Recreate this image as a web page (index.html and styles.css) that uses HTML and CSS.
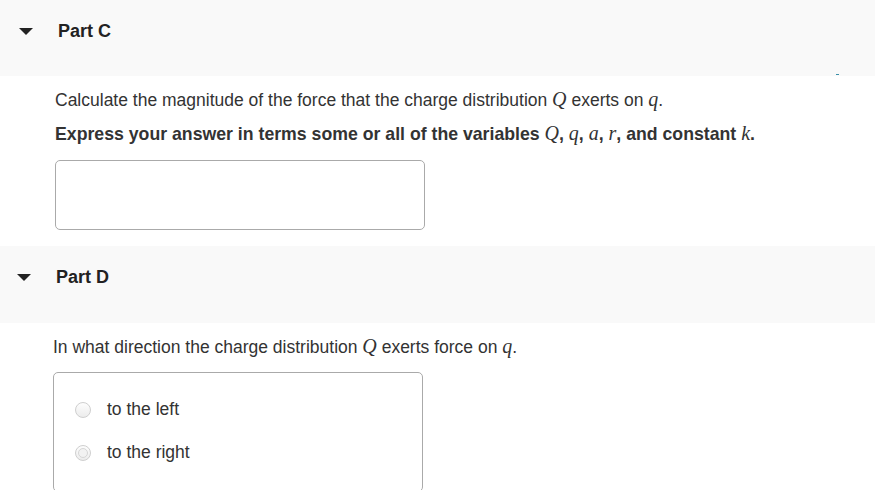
FILE: index.html
```html
<!DOCTYPE html>
<html>
<head>
<meta charset="utf-8">
<link rel="stylesheet" href="styles.css">
</head>
<body>
<section class="part part-c">
  <div class="part-header">
    <span class="caret"></span>
    <h2 class="part-title">Part C</h2>
    <span class="marker"></span>
  </div>
  <div class="part-body">
    <p class="prompt">Calculate the magnitude of the force that the charge distribution <span class="math">Q</span> exerts on <span class="math">q</span>.</p>
    <p class="instruction">Express your answer in terms some or all of the variables <span class="math">Q</span>, <span class="math">q</span>, <span class="math">a</span>, <span class="math">r</span>, and constant <span class="math">k</span>.</p>
    <div class="answer-box"></div>
  </div>
</section>
<section class="part part-d">
  <div class="part-header">
    <span class="caret"></span>
    <h2 class="part-title">Part D</h2>
  </div>
  <div class="part-body">
    <p class="prompt">In what direction the charge distribution <span class="math">Q</span> exerts force on <span class="math">q</span>.</p>
    <div class="choices">
      <label class="choice"><span class="radio"></span><span class="choice-text">to the left</span></label>
      <label class="choice"><span class="radio radio-ring"></span><span class="choice-text">to the right</span></label>
    </div>
  </div>
</section>
</body>
</html>
```
FILE: styles.css
```css
html, body {
  margin: 0;
  padding: 0;
  background: #fff;
  font-family: "Liberation Sans", Arial, sans-serif;
  color: #333;
  overflow: hidden;
}

.part-header {
  position: relative;
  display: flex;
  align-items: flex-start;
  background: #f9f9f9;
  box-sizing: border-box;
}

.part-c .part-header {
  height: 76px;
  padding: 21px 0 0 19px;
}

.part-d .part-header {
  height: 77px;
  padding: 21px 0 0 17px;
}

.caret {
  width: 0;
  height: 0;
  border-left: 7px solid transparent;
  border-right: 7px solid transparent;
  border-top: 7px solid #222;
  margin-top: 7px;
}

.part-title {
  margin: 0 0 0 25px;
  font-size: 18px;
  line-height: 21px;
  font-weight: bold;
  color: #222;
}

.marker {
  position: absolute;
  left: 836px;
  top: 74px;
  width: 3px;
  height: 1px;
  background: #3a8fa8;
}

.part-body p {
  margin: 0;
  font-size: 17.5px;
  line-height: 20px;
}

.part-c .part-body {
  padding: 14px 0 16px 55px;
}

.part-d .part-body {
  padding: 14px 0 0 53px;
}

.instruction {
  font-weight: bold;
  font-size: 17.7px !important;
  margin-top: 14px !important;
}

.math {
  font-family: "Liberation Serif", "Times New Roman", serif;
  font-style: italic;
  font-weight: normal;
  font-size: 20px;
  line-height: 10px;
}

.answer-box {
  width: 370px;
  height: 70px;
  box-sizing: border-box;
  margin-top: 16px;
  border: 1px solid #aaa;
  border-radius: 5px;
  background: #fff;
}

.choices {
  width: 370px;
  height: 120px;
  box-sizing: border-box;
  margin-top: 15px;
  border: 1px solid #aaa;
  border-radius: 5px;
  padding: 26px 0 0 21px;
  display: flex;
  flex-direction: column;
  gap: 23px;
}

.choice {
  display: flex;
  align-items: center;
  height: 20px;
}

.radio {
  width: 16px;
  height: 16px;
  box-sizing: border-box;
  border-radius: 50%;
  border: 1px solid #cfcfcf;
  background: linear-gradient(#fdfdfd, #ececec);
  margin-top: 1px;
  display: flex;
  align-items: center;
  justify-content: center;
}

.radio-ring::after {
  content: "";
  width: 10px;
  height: 10px;
  box-sizing: border-box;
  border-radius: 50%;
  border: 1px solid #d6d6d6;
  background: #f2f2f2;
}

.choice-text {
  margin-left: 16px;
  font-size: 17.5px;
  line-height: 20px;
  color: #333;
}
```
